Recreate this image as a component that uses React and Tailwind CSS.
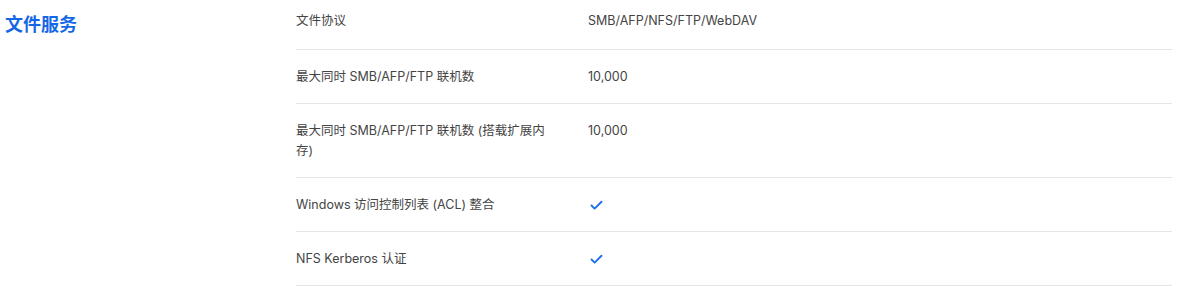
import { Check } from "lucide-react";

const rows = [
  { label: "文件协议", value: "SMB/AFP/NFS/FTP/WebDAV" },
  { label: "最大同时 SMB/AFP/FTP 联机数", value: "10,000" },
  { label: "最大同时 SMB/AFP/FTP 联机数 (搭载扩展内存)", value: "10,000" },
  { label: "Windows 访问控制列表 (ACL) 整合", check: true },
  { label: "NFS Kerberos 认证", check: true },
];

const SpecRow = ({ label, value, check, first }) => (
  <div
    className={`flex border-b border-[#e5e5e5] ${first ? "pt-[11px] pb-[18px]" : "py-[16.5px]"}`}
  >
    <div className="w-[252px] shrink-0 text-[12.5px] leading-[20px] text-[#444]">{label}</div>
    <div className="pl-[40px] text-[12.5px] leading-[20px] text-[#444]">
      {check ? (
        <Check className="mt-[3px] ml-[1px] h-[15px] w-[15px] text-[#1e6fe8]" strokeWidth={3} />
      ) : (
        value
      )}
    </div>
  </div>
);

export default function App() {
  return (
    <div
      className="flex bg-white w-[1200px] h-[286px]"
      style={{ fontFamily: 'Inter, "Noto Sans CJK SC", sans-serif' }}
    >
      <div className="w-[296px] shrink-0 pl-[5px] pt-[12px]">
        <h2 className="text-[18px] leading-[26px] font-bold text-[#1467e6]">文件服务</h2>
      </div>
      <div className="w-[876px]">
        {rows.map((r, i) => (
          <SpecRow key={r.label} {...r} first={i === 0} />
        ))}
      </div>
    </div>
  );
}
